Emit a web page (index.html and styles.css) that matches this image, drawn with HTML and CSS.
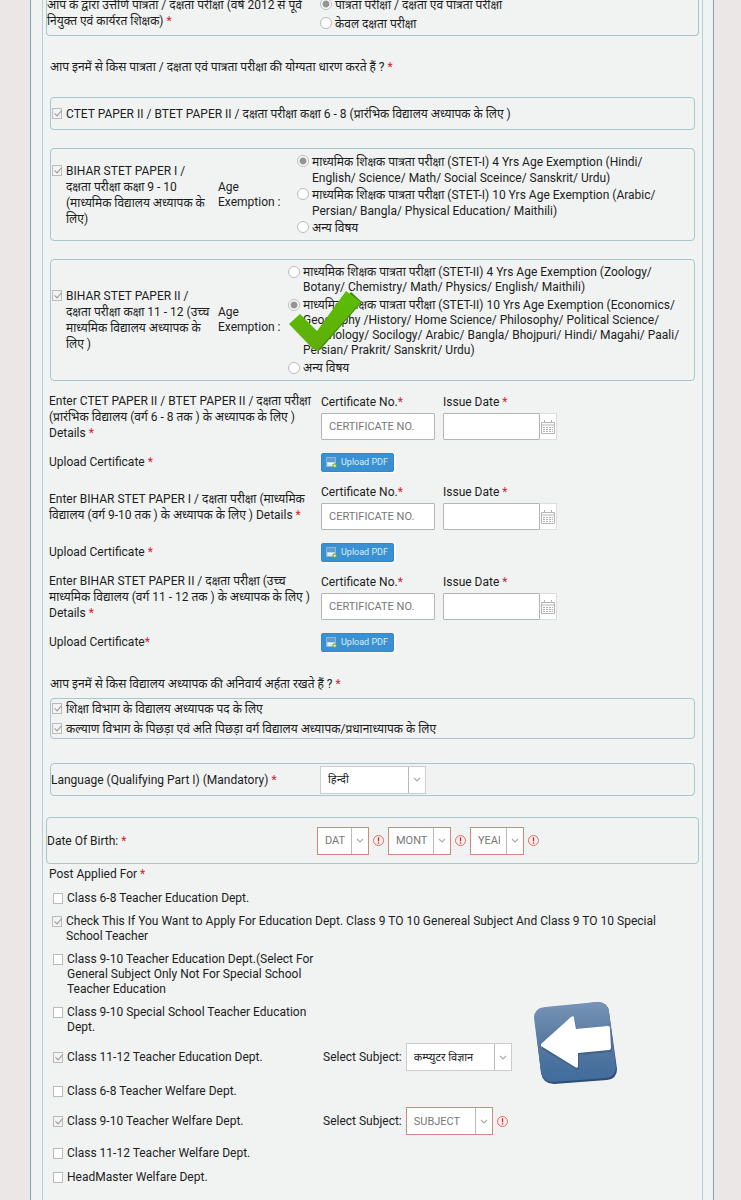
FILE: index.html
```html
<!DOCTYPE html>
<html lang="hi">
<head>
<meta charset="utf-8">
<meta name="viewport" content="width=device-width, initial-scale=1">
<title>Teacher Application</title>
<link rel="stylesheet" href="styles.css">
</head>
<body>
<svg class="defs" aria-hidden="true">
  <symbol id="chevron" viewBox="0 0 8 5"><path d="M1 1l3 3 3-3" fill="none" stroke="#aaa" stroke-width="1.1"/></symbol>
  <symbol id="alert" viewBox="0 0 11 11"><circle cx="5.5" cy="5.5" r="5" fill="#f8eeee" stroke="#dc6058" stroke-width=".9"/><path d="M5.5 2.300v4" stroke="#c62d25" stroke-width="1.300"/><circle cx="5.5" cy="8" r=".8" fill="#c62d25"/></symbol>
  <symbol id="calendar" viewBox="0 0 14 14"><path d="M.5 2.5h13v11H.5zM.5 5h13M3.500 0v3M10.500 0v3" fill="none" stroke="#b5b5b5"/><path d="M2 7.500h10M2 9.500h10M2 11.500h10" stroke="#b0b0b0" stroke-dasharray="2 1"/></symbol>
  <symbol id="upload" viewBox="0 0 11 11"><path d="M.5.5h9v9h-9z" fill="#b9d7ee" stroke="#8fb6d3"/><path d="M1 1h8v4H1z" fill="#5f9ed0"/><path d="M2 6.500h5M2 8h4" stroke="#fff"/><circle cx="8.700" cy="8.700" r="2.200" fill="#6cae3c"/><path d="M8.700 7.400v2.600M7.400 8.700h2.600" stroke="#f4f3a0"/></symbol>
</svg>
<main class="page">
<form class="form">

  <div role="group" class="box box-wide box-first">
    <div class="exam-label">आप के द्वारा उत्तीर्ण पात्रता / दक्षता परीक्षा (वर्ष 2012 से पूर्व<br>नियुक्त एवं कार्यरत शिक्षक) <b class="req">*</b></div>
    <div class="exam-options">
      <label class="option"><input type="radio" name="exam" checked><span>पात्रता परीक्षा / दक्षता एवं पात्रता परीक्षा</span></label>
      <label class="option"><input type="radio" name="exam"><span>केवल दक्षता परीक्षा</span></label>
    </div>
  </div>

  <p class="question question-tall">आप इनमें से किस पात्रता / दक्षता एवं पात्रता परीक्षा की योग्यता धारण करते हैं ? <b class="req">*</b></p>

  <div role="group" class="box box-line">
    <label class="option"><input type="checkbox" checked><span>CTET PAPER II / BTET PAPER II / दक्षता परीक्षा कक्षा 6 - 8 (प्रारंभिक विद्यालय अध्यापक के लिए )</span></label>
  </div>

  <div role="group" class="box stet stet-one">
    <label class="option"><input type="checkbox" checked><span>BIHAR STET PAPER I /<br>दक्षता परीक्षा कक्षा 9 - 10<br>(माध्यमिक विद्यालय अध्यापक के<br>लिए)</span></label>
    <div class="age">Age<br>Exemption :</div>
    <div class="choices">
      <label class="option"><input type="radio" name="stet1" checked><span>माध्यमिक शिक्षक पात्रता परीक्षा (STET-I) 4 Yrs Age Exemption (Hindi/<br>English/ Science/ Math/ Social Sceince/ Sanskrit/ Urdu)</span></label>
      <label class="option"><input type="radio" name="stet1"><span>माध्यमिक शिक्षक पात्रता परीक्षा (STET-I) 10 Yrs Age Exemption (Arabic/<br>Persian/ Bangla/ Physical Education/ Maithili)</span></label>
      <label class="option"><input type="radio" name="stet1"><span>अन्य विषय</span></label>
    </div>
  </div>

  <div role="group" class="box stet stet-two">
    <label class="option"><input type="checkbox" checked><span>BIHAR STET PAPER II /<br>दक्षता परीक्षा कक्षा 11 - 12 (उच्च<br>माध्यमिक विद्यालय अध्यापक के<br>लिए )</span></label>
    <div class="age">Age<br>Exemption :</div>
    <div class="choices">
      <label class="option"><input type="radio" name="stet2"><span>माध्यमिक शिक्षक पात्रता परीक्षा (STET-II) 4 Yrs Age Exemption (Zoology/<br>Botany/ Chemistry/ Math/ Physics/ English/ Maithili)</span></label>
      <label class="option"><input type="radio" name="stet2" checked><span>माध्यमिक शिक्षक पात्रता परीक्षा (STET-II) 10 Yrs Age Exemption (Economics/<br>Geography /History/ Home Science/ Philosophy/ Political Science/<br>Psychology/ Socilogy/ Arabic/ Bangla/ Bhojpuri/ Hindi/ Magahi/ Paali/<br>Persian/ Prakrit/ Sanskrit/ Urdu)</span></label>
      <label class="option"><input type="radio" name="stet2"><span>अन्य विषय</span></label>
      <svg class="tick" viewBox="0 0 76 62" aria-hidden="true">
        <defs><linearGradient id="green" x1="0" y1="0" x2="0" y2="1"><stop offset="0" stop-color="#5cbd08"/><stop offset="1" stop-color="#5fae08"/></linearGradient></defs>
        <path d="M11 26l4 1 14 18L63 2l11 10-42 48-5-1z" fill="#3b8a04"/>
        <path d="M1 34l11-10 17 17L58 1l15 11-43 48-5-1z" fill="url(#green)"/>
      </svg>
    </div>
  </div>

  <section class="certificates">
    <div class="certificate">
      <div>Enter CTET PAPER II / BTET PAPER II / दक्षता परीक्षा<br>(प्रारंभिक विद्यालय (वर्ग 6 - 8 तक ) के अध्यापक के लिए )<br>Details <b class="req">*</b></div>
      <div class="fields">
        <div class="field field-number"><label for="no1">Certificate No.<b class="req">*</b></label><input class="text" id="no1" type="text" placeholder="CERTIFICATE NO."></div>
        <div class="field field-date"><label for="date1">Issue Date <b class="req">*</b></label><div class="date"><input class="text" id="date1" type="text"><button class="pick" type="button" aria-label="Pick date"><svg><use href="#calendar"/></svg></button></div></div>
      </div>
      <div>Upload Certificate <b class="req">*</b></div>
      <div><button class="upload" type="button"><svg><use href="#upload"/></svg>Upload PDF</button></div>
    </div>
    <div class="certificate">
      <div>Enter BIHAR STET PAPER I / दक्षता परीक्षा (माध्यमिक<br>विद्यालय (वर्ग 9-10 तक ) के अध्यापक के लिए ) Details <b class="req">*</b></div>
      <div class="fields">
        <div class="field field-number"><label for="no2">Certificate No.<b class="req">*</b></label><input class="text" id="no2" type="text" placeholder="CERTIFICATE NO."></div>
        <div class="field field-date"><label for="date2">Issue Date <b class="req">*</b></label><div class="date"><input class="text" id="date2" type="text"><button class="pick" type="button" aria-label="Pick date"><svg><use href="#calendar"/></svg></button></div></div>
      </div>
      <div>Upload Certificate <b class="req">*</b></div>
      <div><button class="upload" type="button"><svg><use href="#upload"/></svg>Upload PDF</button></div>
    </div>
    <div class="certificate">
      <div>Enter BIHAR STET PAPER II / दक्षता परीक्षा (उच्च<br>माध्यमिक विद्यालय (वर्ग 11 - 12 तक ) के अध्यापक के लिए )<br>Details <b class="req">*</b></div>
      <div class="fields">
        <div class="field field-number"><label for="no3">Certificate No.<b class="req">*</b></label><input class="text" id="no3" type="text" placeholder="CERTIFICATE NO."></div>
        <div class="field field-date"><label for="date3">Issue Date <b class="req">*</b></label><div class="date"><input class="text" id="date3" type="text"><button class="pick" type="button" aria-label="Pick date"><svg><use href="#calendar"/></svg></button></div></div>
      </div>
      <div>Upload Certificate<b class="req">*</b></div>
      <div><button class="upload" type="button"><svg><use href="#upload"/></svg>Upload PDF</button></div>
    </div>
  </section>

  <p class="question question-short">आप इनमें से किस विद्यालय अध्यापक की अनिवार्य अर्हता रखते हैं ? <b class="req">*</b></p>

  <div role="group" class="box departments">
    <label class="option"><input type="checkbox" checked><span>शिक्षा विभाग के विद्यालय अध्यापक पद के लिए</span></label>
    <label class="option"><input type="checkbox" checked><span>कल्याण विभाग के पिछड़ा एवं अति पिछड़ा वर्ग विद्यालय अध्यापक/प्रधानाध्यापक के लिए</span></label>
  </div>

  <div role="group" class="box box-line language">
    <label for="lang">Language (Qualifying Part I) (Mandatory) <b class="req">*</b></label>
    <span class="combo combo-long"><select id="lang"><option>हिन्दी</option></select><svg><use href="#chevron"/></svg></span>
  </div>

  <div role="group" class="box box-wide birth">
    <label for="day">Date Of Birth: <b class="req">*</b></label>
    <div class="birth-parts">
      <span class="combo combo-error combo-day"><select id="day"><option>DATE</option></select><svg><use href="#chevron"/></svg></span><svg class="alert"><use href="#alert"/></svg>
      <span class="combo combo-error combo-month"><select aria-label="Month"><option>MONTH</option></select><svg><use href="#chevron"/></svg></span><svg class="alert"><use href="#alert"/></svg>
      <span class="combo combo-error combo-year"><select aria-label="Year"><option>YEAR</option></select><svg><use href="#chevron"/></svg></span><svg class="alert"><use href="#alert"/></svg>
    </div>
  </div>

  <p class="posts-title">Post Applied For <b class="req">*</b></p>
  <section class="posts">
    <div class="post"><label class="option"><input type="checkbox"><span>Class 6-8 Teacher Education Dept.</span></label></div>
    <div class="post post-full"><label class="option"><input type="checkbox" checked><span>Check This If You Want to Apply For Education Dept. Class 9 TO 10 Genereal Subject And Class 9 TO 10 Special School Teacher</span></label></div>
    <div class="post"><label class="option"><input type="checkbox"><span>Class 9-10 Teacher Education Dept.(Select For General Subject Only Not For Special School Teacher Education</span></label></div>
    <div class="post"><label class="option"><input type="checkbox"><span>Class 9-10 Special School Teacher Education Dept.</span></label></div>
    <div class="post"><label class="option"><input type="checkbox" checked><span>Class 11-12 Teacher Education Dept.</span></label>
      <div class="subject"><label for="sub1">Select Subject:</label><span class="combo combo-long"><select id="sub1"><option>कम्प्युटर विज्ञान</option></select><svg><use href="#chevron"/></svg></span>
      <svg class="arrow" viewBox="0 0 84 82" aria-hidden="true">
        <defs><linearGradient id="blue" x1="0" y1="0" x2="0" y2="1"><stop offset="0" stop-color="#7794b8"/><stop offset=".5" stop-color="#57799f"/><stop offset="1" stop-color="#3f6c9d"/></linearGradient></defs>
        <path d="M1 18Q0 8 11 7L63 0q11 0 12 10l8 57q0 10-10 11l-53 4q-11 0-13-11z" fill="#2d4d74"/>
        <path d="M0 16Q0 6 11 5L63 0q11 0 12 10l7 55q0 10-10 11l-52 4q-11 1-13-10z" fill="url(#blue)"/>
        <path d="M8 45L38 18q3-2 3 1l2 10 32-3q2 0 2 2l1 20q0 2-2 2l-31 3 0 13q0 3-3 1L8 47z" fill="#34506f" opacity=".5"/>
        <path d="M7 42L37 15q3-2 3 1l2 11 32-3q2 0 2 2l1 20q0 2-2 2l-31 3 0 13q0 3-3 1L7 44z" fill="#fff"/>
      </svg></div></div>
    <div class="post post-welfare"><label class="option"><input type="checkbox"><span>Class 6-8 Teacher Welfare Dept.</span></label></div>
    <div class="post"><label class="option"><input type="checkbox" checked><span>Class 9-10 Teacher Welfare Dept.</span></label>
      <div class="subject"><label for="sub2">Select Subject:</label><span class="combo combo-error combo-subject"><select id="sub2"><option>SUBJECT</option></select><svg><use href="#chevron"/></svg></span><svg class="alert"><use href="#alert"/></svg></div></div>
    <div class="post post-last"><label class="option"><input type="checkbox"><span>Class 11-12 Teacher Welfare Dept.</span></label></div>
    <div class="post"><label class="option"><input type="checkbox"><span>HeadMaster Welfare Dept.</span></label></div>
  </section>
</form>
</main>
</body>
</html>
```

FILE: styles.css
```css
* { box-sizing: border-box; }

body {
  margin: 0;
  background: #ece7e7;
  color: #1c1c1c;
  font: 12px/16px Roboto, "Noto Sans Devanagari", "Noto Sans", sans-serif;
}

p { margin: 0; }
.defs { position: absolute; width: 0; height: 0; }
.req { color: #d32430; font-weight: 400; }

.page {
  display: flex;
  min-height: 100vh;
  margin: 0 27px 0 30px;
  padding: 0 10px 0 11px;
  border: solid #7ea3b7;
  border-width: 0 1px;
  background: #f0f3f2;
  overflow: hidden;
}

.form {
  flex: 1;
  min-width: 0;
  padding: 0 7px;
  border: solid #b4cfd5;
  border-width: 0 1px;
}

.box {
  display: flex;
  align-items: center;
  padding: 0 1px;
  border: 1px solid #a6c8ca;
  border-radius: 4px;
}

.box-wide { margin: 0 -4px; }
.box-line { min-height: 33px; }

.option { display: flex; align-items: flex-start; gap: 4px; }

input[type="checkbox"],
input[type="radio"] {
  position: relative;
  flex: none;
  appearance: none;
  margin: 2px 0 0;
  border: 1px solid #bbb;
  background: #fff;
}
input[type="checkbox"] { width: 10px; height: 11px; }
input[type="checkbox"]:checked { background: #f3f3f3; }
input[type="checkbox"]:checked::before {
  content: "";
  position: absolute;
  left: 3px;
  top: 0;
  width: 3px;
  height: 6px;
  border: solid #999;
  border-width: 0 1px 1px 0;
  transform: rotate(42deg);
}
input[type="radio"] { width: 12px; height: 12px; margin-top: 1px; border-radius: 50%; }
input[type="radio"]:checked { background: radial-gradient(circle, #959595 0 3px, #fff 4px); }

/* Eligibility */
.box-first {
  align-items: flex-start;
  min-height: 38px;
  margin-top: -3px;
  padding: 0;
  border-top: 0;
  border-radius: 0 0 4px 4px;
}
.exam-label { width: 273px; flex: none; }
.exam-options .option { gap: 3px; min-height: 19px; }

.question { display: flex; gap: 3px; align-items: center; }
.question-tall { min-height: 61px; }
.question-short { min-height: 36px; padding-top: 8px; }

.stet {
  display: grid;
  grid-template-columns: 166px 79px 1fr;
  margin-top: 18px;
}
.stet-one { min-height: 93px; }
.stet-two { min-height: 122px; grid-template-columns: 166px 70px 1fr; }
.age { line-height: 15px; }
.choices { position: relative; display: grid; gap: 1px; }
.choices .option { gap: 3px; }
.stet-two .choices { gap: 3px; line-height: 15px; }
.tick { position: absolute; left: 0; top: 25px; width: 76px; height: 62px; }

/* Certificates */
.certificates { padding-top: 11px; }
.certificate {
  display: grid;
  grid-template-columns: 272px 1fr;
  grid-template-rows: 50px 40px;
  align-items: center;
  margin-left: -1px;
}
.fields { display: flex; gap: 8px; }
.field { display: grid; gap: 3px; }
.field-number { width: 114px; }
.field-date { width: 114px; }
.text {
  width: 100%;
  min-width: 0;
  height: 27px;
  padding: 0 7px;
  border: 1px solid #b5b5b5;
  border-radius: 1px;
  background: #fff;
  font: inherit;
  font-size: 11px;
}
.text::placeholder { color: #777; opacity: 1; }
.date { display: flex; }
.pick {
  display: grid;
  place-items: center;
  flex: none;
  width: 17px;
  padding: 0;
  border: 1px solid #ddd;
  border-left: 0;
  background: #fff;
}
.pick svg { width: 14px; height: 14px; }
.upload {
  display: flex;
  align-items: center;
  gap: 4px;
  width: 73px;
  height: 19px;
  padding: 0 4px;
  border: 1px solid #3788c5;
  border-radius: 2px;
  background: #3991d3;
  box-shadow: 2px 1px 2px #fff;
  color: #dfedf8;
  font: 9px/12px Roboto, sans-serif;
  white-space: nowrap;
}
.upload svg { width: 11px; height: 11px; }

.departments { display: grid; align-content: center; gap: 4px; min-height: 41px; }

/* Drop-downs */
.combo {
  display: flex;
  flex: none;
  height: 28px;
  border: 1px solid #ccc;
  background: #fff;
}
.combo select {
  flex: 1;
  min-width: 0;
  padding: 0 6px 0 7px;
  appearance: none;
  border: 0;
  border-right: 1px solid #bbb;
  border-radius: 0;
  background: transparent;
  color: #222;
  font: inherit;
  font-size: 11px;
}
.combo svg { align-self: center; flex: none; width: 8px; height: 5px; margin: 0 4px; }
.combo-long { width: 106px; }
.combo-error { border-color: #d3887f; }
.combo-error select { color: #777; }
.combo-day { width: 52px; }
.combo-month { width: 63px; }
.combo-year { width: 54px; }
.combo-subject { width: 87px; }
.alert { flex: none; width: 11px; height: 11px; }

.language { margin-top: 24px; padding: 0; }
.language label { width: 269px; }
.birth { min-height: 47px; margin-top: 21px; padding: 0; }
.birth > label { width: 270px; }
.birth-parts { display: flex; align-items: center; gap: 4px; }

/* Posts */
.posts-title { margin-left: -1px; padding: 2px 0 8px; }
.posts { display: grid; gap: 8px; line-height: 15px; padding-left: 3px; }
.post { display: flex; align-items: center; min-height: 16px; }
.post .option { width: 270px; }
.post-full .option { width: auto; max-width: 630px; margin-left: -1px; }
.post-welfare { margin-top: 4px; }
.post-last { margin-top: 2px; }
.subject { position: relative; display: flex; align-items: center; gap: 4px; }
.arrow { position: absolute; left: 211px; top: -41px; width: 84px; height: 82px; }
```
